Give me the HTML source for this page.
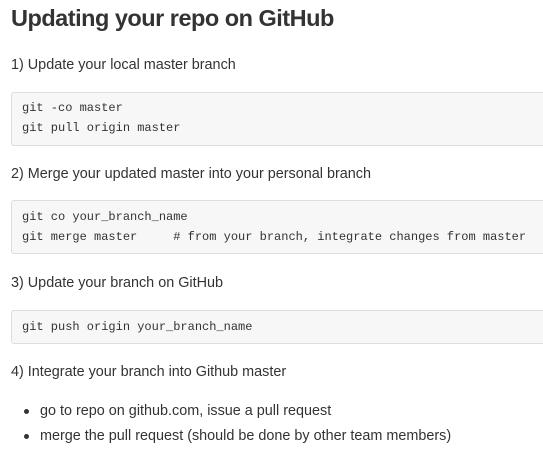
<!DOCTYPE html>
<html><head><style>
body{margin:0;background:#fff;font-family:"Liberation Sans",Arial,sans-serif;color:#333;width:543px;height:462px;overflow:hidden;position:relative}
.a{position:absolute;white-space:pre}
h1{position:absolute;left:11px;top:1px;margin:0;font-size:23.5px;letter-spacing:-0.5px;font-weight:bold;line-height:34px;color:#333;white-space:nowrap}
.p{font-size:14.4px;line-height:20px}
.code{position:absolute;left:11px;width:560px;background:#f7f7f7;border:1px solid #ddd;border-radius:3px;box-sizing:border-box}
.code div{position:absolute;left:10px;font-family:"Liberation Mono","DejaVu Sans Mono",monospace;font-size:12px;line-height:20px;color:#333;white-space:pre}
.dot{position:absolute;left:24px;width:5px;height:5px;border-radius:50%;background:#333}
</style></head><body>
<h1>Updating your repo on GitHub</h1>
<div class="a p" style="left:11px;top:55px">1) Update your local master branch</div>
<div class="code" style="top:92px;height:54px"><div style="top:5px">git -co master
git pull origin master</div></div>
<div class="a p" style="left:11px;top:164px">2) Merge your updated master into your personal branch</div>
<div class="code" style="top:200px;height:54px"><div style="top:6px">git co your_branch_name
git merge master     # from your branch, integrate changes from master</div></div>
<div class="a p" style="left:11px;top:273px">3) Update your branch on GitHub</div>
<div class="code" style="top:310px;height:34px"><div style="top:6px">git push origin your_branch_name</div></div>
<div class="a p" style="left:11px;top:362px">4) Integrate your branch into Github master</div>
<div class="dot" style="top:409px"></div>
<div class="a p" style="left:40px;top:401px">go to repo on github.com, issue a pull request</div>
<div class="dot" style="top:434px"></div>
<div class="a p" style="left:40px;top:426px">merge the pull request (should be done by other team members)</div>
</body></html>
